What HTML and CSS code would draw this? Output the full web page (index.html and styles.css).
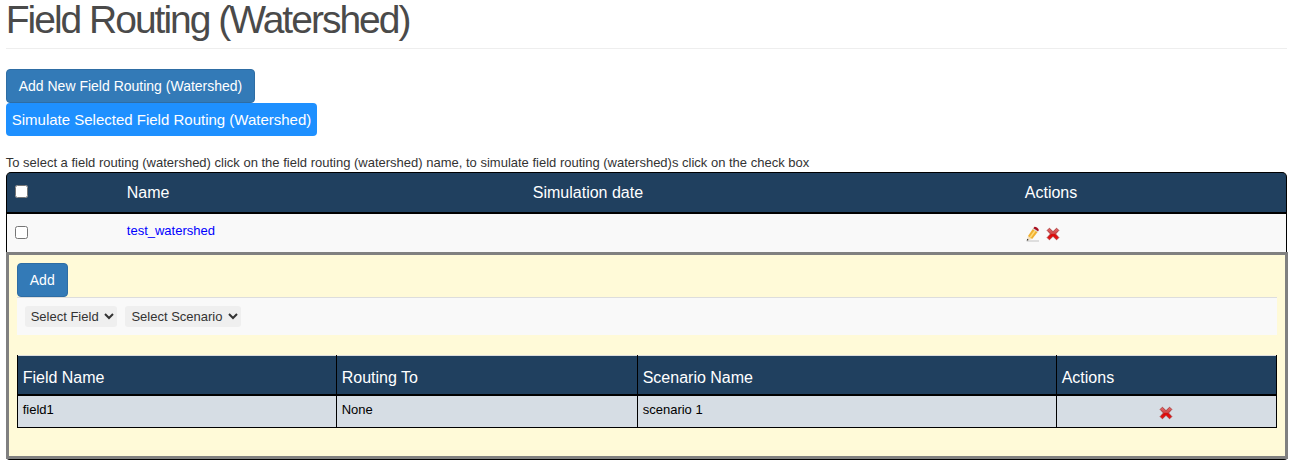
FILE: index.html
```html
<!DOCTYPE html>
<html lang="en">
<head>
<meta charset="utf-8">
<title>Field Routing (Watershed)</title>
<link rel="stylesheet" href="styles.css">
</head>
<body>
<svg class="defs" width="0" height="0" aria-hidden="true">
  <defs>
    <linearGradient id="red" x1="0" y1="0" x2="0" y2="1">
      <stop offset="0" stop-color="#e46a6a"/><stop offset=".48" stop-color="#d04444"/><stop offset=".55" stop-color="#d80808"/><stop offset="1" stop-color="#f01818"/>
    </linearGradient>
    <symbol id="cross" viewBox="0 0 16 16">
      <path d="M4.400 2.200 8 5.700l3.600-3.500 2.200 2.200L10.500 8l3.300 3.600-2.200 2.200L8 10.300l-3.600 3.500-2.200-2.200L5.500 8 2.200 4.400z" fill="url(#red)" stroke="#a83434" stroke-width=".9" stroke-linejoin="round"/>
    </symbol>
    <symbol id="pencil" viewBox="0 0 16 16">
      <path d="M2 14.300h12v1.400H1.500z" fill="#d5d5d5"/>
      <path d="M2 14.500 3 9.800 7.200 13z" fill="#f3dfc0"/>
      <path d="M1.700 14.700 2.200 12.700 3.700 13.900z" fill="#222"/>
      <path d="M3 9.900 8.100 2.600 12.800 5.700 7.200 13z" fill="#f0b030"/>
      <path d="M4.600 10.900 9.800 3.700l1.300.9-5.200 7.200z" fill="#ffdc78"/>
      <path d="M7.700 3.200 8.600 2 13.400 5.100 12.500 6.300z" fill="#d8d8d8"/>
      <path d="M8.400 2.200 9.400.8q3.400.3 4.500 3.200l-.8 1.300z" fill="#a81020"/>
    </symbol>
  </defs>
</svg>
<main class="page">
  <h1 class="title">Field Routing (Watershed)</h1>
  <div class="toolbar">
    <button class="btn btn-primary btn-new">Add New Field Routing (Watershed)</button>
    <button class="btn btn-simulate">Simulate Selected Field Routing (Watershed)</button>
  </div>
  <p class="hint">To select a field routing (watershed) click on the field routing (watershed) name, to simulate field routing (watershed)s click on the check box</p>
  <section class="list">
    <div class="row list-head">
      <span class="check"><input type="checkbox"></span>
      <span>Name</span><span>Simulation date</span><span>Actions</span>
    </div>
    <div class="row list-item">
      <span class="check"><input type="checkbox"></span>
      <a class="link">test_watershed</a><span></span>
      <span class="icons"><svg class="icon"><use href="#pencil"/></svg><svg class="icon"><use href="#cross"/></svg></span>
    </div>
    <div class="panel">
      <button class="btn btn-primary btn-add">Add</button>
      <div class="selects">
        <select class="select select-field"><option>Select Field</option></select>
        <select class="select select-scenario"><option>Select Scenario</option></select>
      </div>
      <div class="fields">
        <div class="field-row field-head"><span>Field Name</span><span>Routing To</span><span>Scenario Name</span><span>Actions</span></div>
        <div class="field-row field-item"><span>field1</span><span>None</span><span>scenario 1</span><span class="center"><svg class="icon"><use href="#cross"/></svg></span></div>
      </div>
    </div>
  </section>
</main>
</body>
</html>
```
FILE: styles.css
```css
* { box-sizing: border-box; }
body { margin: 0; background: #fff; color: #333; font: 13px/18px "Liberation Sans", Arial, sans-serif; overflow: hidden; }
.defs { display: block; }
.page { width: 1282px; margin-left: 6px; }
.title { margin: 0 0 0 -0.3px; width: 1281px; height: 49px; border-bottom: 1px solid #eee; color: #4a4a4a; font-size: 39px; font-weight: 400; line-height: 40px; letter-spacing: -2px; }
.toolbar { display: flex; flex-direction: column; align-items: flex-start; padding-top: 20px; }
.btn { display: block; margin: 0; font-family: inherit; color: #fff; border-radius: 4px; white-space: nowrap; }
.btn-primary { height: 34px; padding: 0 12px; border: 1px solid #2e6da4; background: #337ab7; font-size: 14px; line-height: 20px; }
.btn-new { width: 249px; padding: 0 11px; }
.btn-add { width: 51px; padding: 0 11.5px 0 11px; }
.btn-simulate { width: 311px; height: 33px; padding: 0 5px; border: 0; background: #1e90ff; font-size: 15px; }
.hint { margin: 18px 0 0 -0.3px; height: 18px; }
.list { display: flow-root; border-bottom: 1px solid #000; border-radius: 5px 5px 4px 4px; }
.row { display: grid; width: 1281px; grid-template-columns: 111.8px 406px 492px 1fr; padding: 0 8px; border: solid #000; border-width: 0 1px; }
.list-head { height: 42px; border-width: 1px 1px 2px; border-radius: 5px 5px 0 0; background: #20405f; color: #fff; font-size: 16px; line-height: 39px; }
.list-item { height: 38px; background: #f9f9f9; line-height: 33px; }
.check { display: flex; padding-top: 12px; }
.check input { width: 13px; height: 13px; margin: 0; }
.link { color: #00f; }
.icons { display: flex; gap: 4px; padding: 12px 0 0 0.2px; }
.icon { display: block; width: 16px; height: 16px; }
.panel { height: 207px; padding: 8px; border: 3px solid #808080; background: #fffad8; }
.selects { display: flex; gap: 8px; width: 1260px; height: 38px; padding: 8px; border-top: 1px solid #ddd; background: #f9f9f9; }
.select { height: 21px; margin: 0; padding: 0 2px; border: 0; border-radius: 3px; background-color: #efefef; color: #333; font: 13px "Liberation Sans", Arial, sans-serif; }
.select-field { width: 92px; padding-left: 1.7px; }
.select-scenario { width: 116px; padding-left: 2.4px; padding-right: 1px; }
.fields { width: 1260px; margin-top: 20px; border-left: 1px solid #000; }
.field-row { display: grid; grid-template-columns: 319px 301px 419px 220px; color: #000; }
.field-row > span { border-right: 1px solid #000; padding-left: 4.7px; }
.field-head { height: 41px; border-bottom: 2px solid #000; background: linear-gradient(#ddd 1px, #20405f 1px); color: #fff; font-size: 16px; line-height: 45px; }
.field-head > span { height: 39px; }
.field-item { height: 32px; border-bottom: 1px solid #000; background: #d6dde4; line-height: 27px; }
.field-item > .center { display: flex; justify-content: center; padding: 9px 1px 0 0; }
```
